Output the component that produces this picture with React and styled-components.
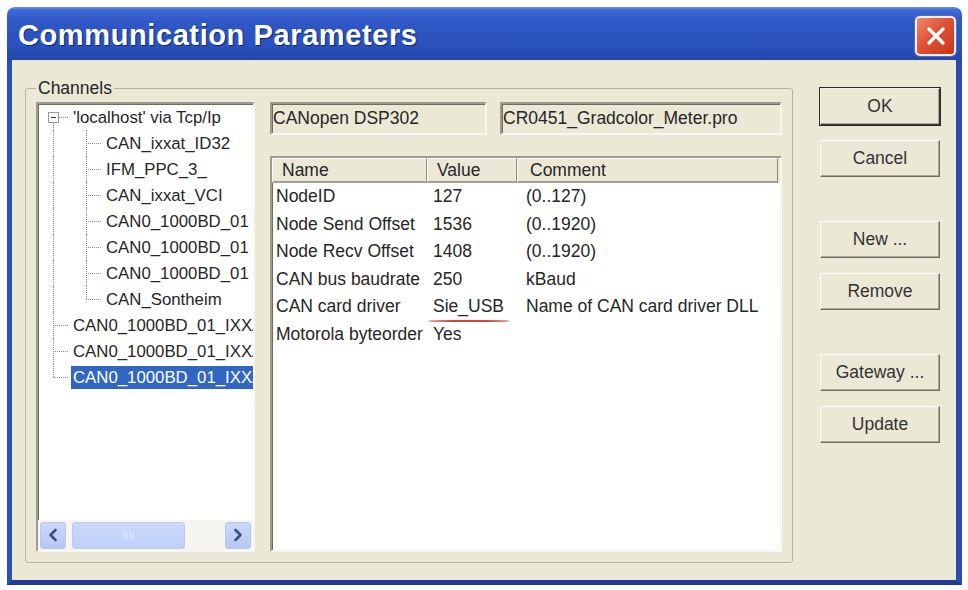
import React from "react";
import styled, { createGlobalStyle, css } from "styled-components";

const GlobalStyle = createGlobalStyle`
  html, body { margin: 0; padding: 0; background: #ffffff; }
  body { font-family: "Liberation Sans", Arial, sans-serif; }
  * { box-sizing: border-box; }
`;

const FACE = "#ebe9d6";
const TEXT = "#262626";
const FONT = "17.5px";

const sunken = css`
  border: 2px solid;
  border-color: #9e9b8c #f7f6f1 #f7f6f1 #9e9b8c;
  box-shadow: inset 1px 1px 0 #6f6d63;
`;

const Page = styled.div`
  width: 968px;
  height: 590px;
  padding: 7px 6px 5px 7px;
  background: #ffffff;
`;

const Window = styled.div`
  width: 955px;
  height: 578px;
  display: flex;
  flex-direction: column;
  border-radius: 8px 8px 0 0;
  overflow: hidden;
`;

const TitleBar = styled.div`
  height: 53px;
  flex: none;
  display: flex;
  align-items: center;
  justify-content: space-between;
  padding: 4px 6px 0 11px;
  background: linear-gradient(
    to bottom,
    #6f95ea 0px,
    #3f69d6 3px,
    #2f58c6 14px,
    #2b52bf 36px,
    #2448ad 53px
  );
`;

const Title = styled.div`
  color: #ffffff;
  font-family: "Liberation Sans", Arial, sans-serif;
  font-weight: bold;
  font-size: 29px;
  letter-spacing: 0.6px;
  text-shadow: 1px 1px 1px #10286e;
  white-space: nowrap;
`;

const CloseButton = styled.div`
  width: 41px;
  height: 40px;
  margin-top: 1px;
  border-radius: 5px;
  border: 2px solid #f4f0f0;
  background: linear-gradient(135deg, #f08a6c 0%, #de5235 45%, #c8361c 100%);
  display: flex;
  align-items: center;
  justify-content: center;
  box-shadow: 0 0 0 1px #5b6fb6;
`;

const Client = styled.div`
  flex: 1;
  display: flex;
  align-items: flex-start;
  gap: 27px;
  padding: 18px 0 0 13px;
  background: ${FACE};
  border-style: solid;
  border-width: 0 6px 5px 5px;
  border-color: #2c50bb #2a4db5 #1f3a99 #2c50bb;
`;

const Group = styled.fieldset`
  margin: 0;
  min-width: 0;
  width: 768px;
  height: 485px;
  padding: 4px 10px 10px 10px;
  border: 1px solid #b5b3a2;
  border-radius: 3px;
  display: flex;
  gap: 15px;
`;

const Legend = styled.legend`
  padding: 0 2px;
  font-size: ${FONT};
  line-height: 20px;
  color: ${TEXT};
`;

const TreePanel = styled.div`
  width: 219px;
  height: 450px;
  flex: none;
  display: flex;
  flex-direction: column;
  background: #ffffff;
  ${sunken};
`;

const TreeList = styled.div`
  flex: 1;
  overflow: hidden;
  padding-top: 0;
`;

const TreeRow = styled.div`
  display: flex;
  align-items: center;
  height: 26px;
  white-space: nowrap;
  font-size: 16.8px;
  color: ${TEXT};
`;

const Guide = styled.div`
  position: relative;
  width: 33px;
  height: 26px;
  flex: none;

  &::before {
    content: "";
    position: absolute;
    left: 15px;
    border-left: 1px dotted #8f8f8f;
    top: ${(p) => (p.$kind === "first" ? "18px" : "0")};
    bottom: ${(p) => (p.$kind === "last" ? "13px" : "0")};
    display: ${(p) => (p.$kind === "blank" ? "none" : "block")};
  }

  &::after {
    content: "";
    position: absolute;
    top: 13px;
    left: ${(p) => (p.$kind === "first" ? "21px" : "15px")};
    width: ${(p) => (p.$kind === "first" ? "9px" : "15px")};
    border-top: 1px dotted #8f8f8f;
    display: ${(p) =>
      p.$kind === "pipe" || p.$kind === "blank" ? "none" : "block"};
  }
`;

const ExpandBox = styled.span`
  position: absolute;
  left: 10px;
  top: 8px;
  width: 11px;
  height: 11px;
  border: 1px solid #8f9a9c;
  background: #ffffff;
  z-index: 1;

  &::before {
    content: "";
    position: absolute;
    left: 2px;
    right: 2px;
    top: 4px;
    height: 1px;
    background: #333;
  }
`;

const TreeLabel = styled.span`
  display: inline-block;
  height: 23px;
  line-height: 23px;
  padding: 0 2px;
  ${(p) =>
    p.$selected &&
    css`
      background: #3166c2;
      color: #ffffff;
    `}
`;

const HScroll = styled.div`
  height: 30px;
  flex: none;
  display: flex;
  align-items: center;
  padding: 0 2px;
  background: #f6f5f0;
`;

const ScrollArrow = styled.div`
  width: 26px;
  height: 27px;
  flex: none;
  border-radius: 3px;
  border: 1px solid #b7c7ef;
  background: linear-gradient(to bottom, #cad8fa, #b6c8f3);
  display: flex;
  align-items: center;
  justify-content: center;
  margin-left: ${(p) => (p.$end ? "auto" : "0")};
`;

const ScrollThumb = styled.div`
  width: 113px;
  height: 27px;
  margin-left: 6px;
  border-radius: 3px;
  border: 1px solid #bccbf2;
  background: linear-gradient(to bottom, #cdd9fb, #bfcff6);
  display: flex;
  align-items: center;
  justify-content: center;
`;

const DetailColumn = styled.div`
  width: 512px;
  flex: none;
  display: flex;
  flex-direction: column;
  gap: 21px;
`;

const FieldRow = styled.div`
  display: flex;
  gap: 13px;
  height: 33px;
`;

const ReadField = styled.div`
  ${sunken};
  width: ${(p) => p.$w || "auto"};
  flex: ${(p) => (p.$w ? "none" : "1")};
  background: ${FACE};
  font-size: ${FONT};
  color: ${TEXT};
  padding-left: 1px;
  display: flex;
  align-items: center;
  white-space: nowrap;
  overflow: hidden;
`;

const ListView = styled.div`
  ${sunken};
  flex: 1;
  background: #ffffff;
  display: flex;
  flex-direction: column;
  font-size: ${FONT};
  color: ${TEXT};
`;

const COLS = "155px 90px 261px";

const HeaderRow = styled.div`
  display: grid;
  grid-template-columns: ${COLS};
  height: 25px;
  flex: none;
  background: ${FACE};
`;

const HeaderCell = styled.div`
  padding-left: ${(p) => p.$pad}px;
  display: flex;
  align-items: center;
  border-style: solid;
  border-width: 1px 1px 2px 1px;
  border-color: #ffffff #8d8a7c #a3a08f #ffffff;
`;

const DataRow = styled.div`
  display: grid;
  grid-template-columns: ${COLS};
  height: 27.5px;
  align-items: center;
  white-space: nowrap;
`;

const DataCell = styled.div`
  padding-left: ${(p) => p.$pad}px;
  overflow: visible;
`;

const Marked = styled.span`
  position: relative;

  &::after {
    content: "";
    position: absolute;
    left: -5px;
    right: -6px;
    bottom: -6px;
    height: 2px;
    border-radius: 50%;
    background: #d6433a;
  }
`;

const ButtonColumn = styled.div`
  width: 120px;
  flex: none;
  margin-top: 10px;
  display: flex;
  flex-direction: column;
  gap: 44px;
`;

const ButtonGroup = styled.div`
  display: flex;
  flex-direction: column;
  gap: 15px;
`;

const Button = styled.div`
  width: 120px;
  height: 37px;
  display: flex;
  align-items: center;
  justify-content: center;
  background: ${FACE};
  font-size: ${FONT};
  color: #333333;
  border: 1px solid;
  border-color: #ffffff #6f6d63 #6f6d63 #ffffff;
  box-shadow: inset -1px -1px 0 #a9a695
    ${(p) => (p.$default ? ", 0 0 0 1px #2a2a2a" : "")};
  ${(p) =>
    p.$default &&
    css`
      border-color: #f4f3ee #3a3a36 #3a3a36 #f4f3ee;
    `}
`;

const treeRows = [
  { guides: ["first"], label: "'localhost' via Tcp/Ip", expand: true },
  { guides: ["pipe", "tee"], label: "CAN_ixxat_ID32" },
  { guides: ["pipe", "tee"], label: "IFM_PPC_3_" },
  { guides: ["pipe", "tee"], label: "CAN_ixxat_VCI" },
  { guides: ["pipe", "tee"], label: "CAN0_1000BD_01" },
  { guides: ["pipe", "tee"], label: "CAN0_1000BD_01" },
  { guides: ["pipe", "tee"], label: "CAN0_1000BD_01" },
  { guides: ["pipe", "last"], label: "CAN_Sontheim" },
  { guides: ["tee"], label: "CAN0_1000BD_01_IXXAT" },
  { guides: ["tee"], label: "CAN0_1000BD_01_IXXAT" },
  { guides: ["last"], label: "CAN0_1000BD_01_IXXAT", selected: true },
];

const params = [
  ["NodeID", "127", "(0..127)"],
  ["Node Send Offset", "1536", "(0..1920)"],
  ["Node Recv Offset", "1408", "(0..1920)"],
  ["CAN bus baudrate", "250", "kBaud"],
  ["CAN card driver", "Sie_USB", "Name of CAN card driver DLL", true],
  ["Motorola byteorder", "Yes", ""],
];

const Chevron = ({ dir }) => (
  <svg width="12" height="14" viewBox="0 0 12 14">
    <path
      d={dir === "left" ? "M8.5 2 L3.5 7 L8.5 12" : "M3.5 2 L8.5 7 L3.5 12"}
      fill="none"
      stroke="#3d5187"
      strokeWidth="2.6"
      strokeLinecap="round"
      strokeLinejoin="round"
    />
  </svg>
);

const Grip = () => (
  <svg width="12" height="10" viewBox="0 0 12 10">
    {[1, 4, 7, 10].map((x) => (
      <line key={x} x1={x} y1="1" x2={x} y2="9" stroke="#e8eefc" strokeWidth="1" />
    ))}
  </svg>
);

export default function App() {
  return (
    <>
      <GlobalStyle />
      <Page>
        <Window>
          <TitleBar>
            <Title>Communication Parameters</Title>
            <CloseButton>
              <svg width="22" height="22" viewBox="0 0 22 22">
                <path
                  d="M4 4 L18 18 M18 4 L4 18"
                  stroke="#ffffff"
                  strokeWidth="3.4"
                  strokeLinecap="round"
                />
              </svg>
            </CloseButton>
          </TitleBar>
          <Client>
            <Group>
              <Legend>Channels</Legend>
              <TreePanel>
                <TreeList>
                  {treeRows.map((r, i) => (
                    <TreeRow key={i}>
                      {r.guides.map((g, j) => (
                        <Guide key={j} $kind={g}>
                          {r.expand && <ExpandBox />}
                        </Guide>
                      ))}
                      <TreeLabel $selected={r.selected}>{r.label}</TreeLabel>
                    </TreeRow>
                  ))}
                </TreeList>
                <HScroll>
                  <ScrollArrow>
                    <Chevron dir="left" />
                  </ScrollArrow>
                  <ScrollThumb>
                    <Grip />
                  </ScrollThumb>
                  <ScrollArrow $end>
                    <Chevron dir="right" />
                  </ScrollArrow>
                </HScroll>
              </TreePanel>
              <DetailColumn>
                <FieldRow>
                  <ReadField $w="217px">CANopen DSP302</ReadField>
                  <ReadField>CR0451_Gradcolor_Meter.pro</ReadField>
                </FieldRow>
                <ListView>
                  <HeaderRow>
                    <HeaderCell $pad={9}>Name</HeaderCell>
                    <HeaderCell $pad={9}>Value</HeaderCell>
                    <HeaderCell $pad={12}>Comment</HeaderCell>
                  </HeaderRow>
                  {params.map(([n, v, c, mark], i) => (
                    <DataRow key={i}>
                      <DataCell $pad={4}>{n}</DataCell>
                      <DataCell $pad={6}>{mark ? <Marked>{v}</Marked> : v}</DataCell>
                      <DataCell $pad={9}>{c}</DataCell>
                    </DataRow>
                  ))}
                </ListView>
              </DetailColumn>
            </Group>
            <ButtonColumn>
              <ButtonGroup>
                <Button $default>OK</Button>
                <Button>Cancel</Button>
              </ButtonGroup>
              <ButtonGroup>
                <Button>New ...</Button>
                <Button>Remove</Button>
              </ButtonGroup>
              <ButtonGroup>
                <Button>Gateway ...</Button>
                <Button>Update</Button>
              </ButtonGroup>
            </ButtonColumn>
          </Client>
        </Window>
      </Page>
    </>
  );
}
